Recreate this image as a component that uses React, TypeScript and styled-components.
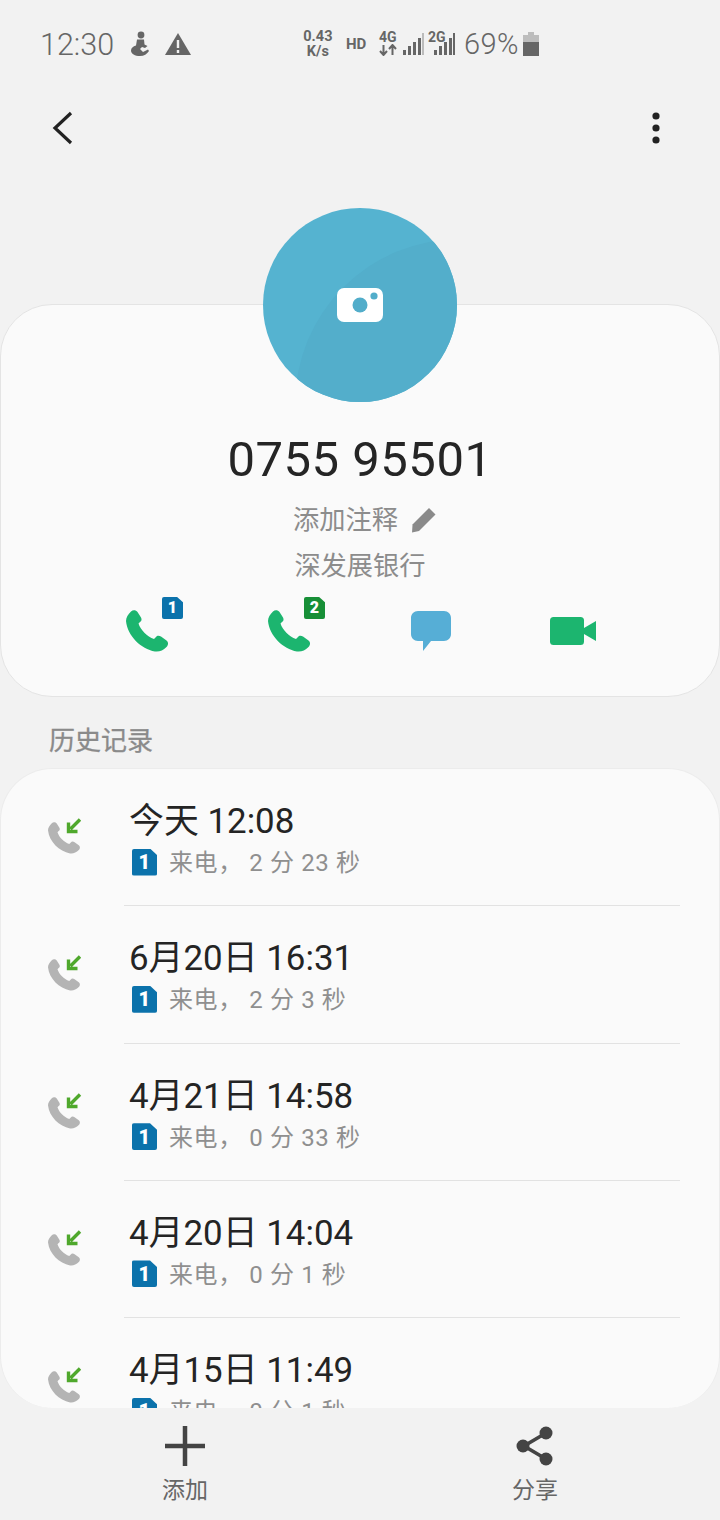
import React from "react";
import styled, { createGlobalStyle } from "styled-components";

const Global = createGlobalStyle`
  html, body { margin: 0; padding: 0; background: #f2f2f2; }
  * { box-sizing: border-box; }
`;

const FONT = `Roboto, "Noto Sans CJK SC", sans-serif`;

const Screen = styled.div`
  width: 720px;
  height: 1520px;
  background: #f2f2f2;
  font-family: ${FONT};
  display: flex;
  flex-direction: column;
  overflow: hidden;
`;

const StatusBar = styled.div`
  height: 88px;
  padding: 0 181px 0 40px;
  display: flex;
  align-items: center;
  justify-content: space-between;
  color: #666;
`;
const StatusGroup = styled.div`
  display: flex;
  align-items: center;
`;
const Clock = styled.span`
  font-size: 30.5px;
  font-weight: 300;
  margin-right: 15px;
`;
const Speed = styled.span`
  font-size: 14.5px;
  font-weight: 700;
  line-height: 15px;
  text-align: center;
  width: 34px;
  margin-right: 11px;
  display: block;
`;
const Hd = styled.span`
  font-size: 15px;
  font-weight: 700;
  width: 22px;
  margin-right: 11px;
`;
const NetStack = styled.div<{ $w: number }>`
  width: ${(p) => p.$w}px;
  height: 26px;
  flex: none;
  display: flex;
  flex-direction: column;
  align-items: flex-start;
  font-size: 14px;
  font-weight: 700;
  line-height: 13px;
  white-space: nowrap;
`;
const Percent = styled.span`
  font-size: 29px;
  font-weight: 300;
  margin: 0 4px 0 9px;
  letter-spacing: 0.5px;
`;

const NavBar = styled.div`
  height: 80px;
  padding: 0 60px 0 52px;
  display: flex;
  align-items: center;
  justify-content: space-between;
`;

const ContactCard = styled.section`
  margin-top: 136px;
  height: 393px;
  background: #fafafa;
  border: 1px solid #e4e4e4;
  border-radius: 52px;
  display: flex;
  flex-direction: column;
  align-items: center;
`;
const Avatar = styled.div`
  width: 194px;
  height: 194px;
  margin-top: -97px;
  border-radius: 50%;
  background: #55b3d0;
  position: relative;
  overflow: hidden;
  flex: none;
  display: flex;
  align-items: center;
  justify-content: center;
  &::before {
    content: "";
    position: absolute;
    left: 32px;
    top: 31px;
    width: 330px;
    height: 330px;
    border-radius: 50%;
    background: #53aecb;
  }
  svg { position: relative; }
`;
const Name = styled.h1`
  margin: 30px 0 0;
  font-size: 49px;
  line-height: 56px;
  font-weight: 400;
  color: #252525;
  letter-spacing: 0.5px;
`;
const NoteRow = styled.div`
  margin-top: 14px;
  height: 36px;
  padding-left: 9px;
  display: flex;
  align-items: center;
  gap: 13px;
  font-size: 26.25px;
  line-height: 36px;
  color: #8c8c8c;
`;
const Org = styled.div`
  margin-top: 10px;
  font-size: 26.25px;
  line-height: 36px;
  color: #8c8c8c;
`;
const Actions = styled.div`
  margin-top: 17px;
  width: 568px;
  display: grid;
  grid-template-columns: repeat(4, 142px);
  height: 60px;
`;
const ActionCell = styled.div`
  position: relative;
  display: flex;
  align-items: center;
  justify-content: center;
`;
const Sim = styled.span<{ $bg: string; $size: number }>`
  display: flex;
  align-items: center;
  justify-content: center;
  flex: none;
  width: ${(p) => p.$size}px;
  height: ${(p) => Math.round(p.$size * 1.07)}px;
  background: ${(p) => p.$bg};
  color: #fff;
  font-weight: 900;
  font-size: ${(p) => Math.round(p.$size * 0.78)}px;
  line-height: 1;
  border-radius: 2px;
  clip-path: polygon(0 0, 72% 0, 100% 24%, 100% 100%, 0 100%);
`;
const SimCorner = styled.div`
  position: absolute;
  left: 86px;
  top: -4px;
`;

const HistoryTitle = styled.h2`
  margin: 26px 0 9px 49px;
  font-size: 26px;
  line-height: 36px;
  font-weight: 400;
  color: #8a8a8a;
  -webkit-text-stroke: 0.3px #8a8a8a;
`;
const HistoryCard = styled.section`
  height: 640px;
  flex: none;
  background: #fafafa;
  border: 1px solid #ececec;
  border-bottom: none;
  border-radius: 52px;
  overflow: hidden;
`;
const Row = styled.div`
  height: 137.33px;
  padding-left: 46px;
  display: flex;
`;
const RowIcon = styled.div`
  width: 36px;
  margin: 48px 41px 0 0;
  flex: none;
`;
const RowBody = styled.div`
  flex: 1;
  margin-right: 39px;
  padding: 31px 0 0 5px;
  border-bottom: 1px solid #e2e2e2;
`;
const When = styled.div`
  font-size: 34.9px;
  line-height: 44px;
  color: #242424;
`;
const Detail = styled.div`
  display: flex;
  align-items: center;
  gap: 12px;
  padding: 1px 0 0 3px;
  height: 35px;
  font-size: 24px;
  color: #8f8f8f;
  letter-spacing: 0.6px;
`;
const DetailText = styled.span`
  margin-bottom: 3px;
`;

const BottomBar = styled.nav`
  flex: 1;
  padding: 0 10px;
  display: grid;
  grid-template-columns: 350px 350px;
`;
const BottomItem = styled.div`
  display: flex;
  flex-direction: column;
  align-items: center;
  padding-top: 18px;
  font-size: 23px;
  line-height: 30px;
  color: #666;
  svg { display: block; margin-bottom: 10px; }
`;

const PHONE =
  "M5 1.5C7-.5 10 0 11.5 2L15 7.5C16 9.5 15.5 11 14 12L12.5 13.5C14.5 20 21 26.5 28 29L30 27C31 25.5 33 25.5 35 26.5L40.5 30.5C42.5 32 42.5 35 40.5 37C37 40.5 33.5 42 29 41.5C15 39 1.5 26 0 11C0 7.5 2 4.5 5 1.5Z";

const PhoneIcon = () => (
  <svg width="42" height="42" viewBox="0 0 42 42"><path d={PHONE} fill="#1cb56f" /></svg>
);

const CallIn = () => (
  <svg width="36" height="38" viewBox="0 0 36 38">
    <g transform="translate(1 5) scale(0.76)"><path d={PHONE} fill="#b4b4b4" /></g>
    <path d="M33 2.5L23.5 12M21.5 5.5V14.5H30.5" fill="none" stroke="#4fa82c" strokeWidth="3.4" />
  </svg>
);

const Bars = ({ last }: { last: string }) => (
  <svg width="21" height="24" viewBox="0 0 21 24">
    <rect x="0" y="18" width="3" height="5" fill="#666" />
    <rect x="5" y="14" width="3" height="9" fill="#666" />
    <rect x="10" y="10" width="3" height="13" fill="#666" />
    <rect x="15" y="6" width="3" height="17" fill="#666" />
    <rect x="19" y="1" width="2" height="22" fill={last} />
  </svg>
);

const calls = [
  ["今天 12:08", "来电， 2 分 23 秒"],
  ["6月20日 16:31", "来电， 2 分 3 秒"],
  ["4月21日 14:58", "来电， 0 分 33 秒"],
  ["4月20日 14:04", "来电， 0 分 1 秒"],
  ["4月15日 11:49", "来电， 0 分 1 秒"],
];

export default function App() {
  return (
    <Screen>
      <Global />
      <StatusBar>
        <StatusGroup>
          <Clock>12:30</Clock>
          <svg width="22" height="26" viewBox="0 0 22 26" style={{ marginRight: 14 }}>
            <circle cx="12" cy="4" r="3.4" fill="#666" />
            <path d="M8 8.5h7l.5 5 3 1.5-2.5 2-3-1-2 2 3 3 5-2.5 1 1.5c-2 3-5 5-9 5-5 0-9-2-9-5.5 0-2.5 2-4 5-5z" fill="#666" />
          </svg>
          <svg width="26" height="24" viewBox="0 0 26 24">
            <path d="M13 1L26 23H0Z" fill="#666" />
            <path d="M13 8v8M13 18v3" stroke="#f2f2f2" strokeWidth="2.4" />
          </svg>
        </StatusGroup>
        <StatusGroup>
          <Speed>0.43<br />K/s</Speed>
          <Hd>HD</Hd>
          <NetStack $w={24}>
            4G
            <svg width="18" height="12" viewBox="0 0 18 12">
              <path d="M4.5 1V10M1 7L4.5 11L8 7M13.5 11V2M10 5L13.5 1L17 5" fill="none" stroke="#666" strokeWidth="2" />
            </svg>
          </NetStack>
          <Bars last="#bbb" />
          <NetStack $w={6} style={{ marginLeft: 4 }}>2G</NetStack>
          <Bars last="#666" />
          <Percent>69%</Percent>
          <svg width="16" height="24" viewBox="0 0 16 24">
            <path d="M5 0h6v3h5v7H0V3h5z" fill="#bdbdbd" />
            <rect x="0" y="10" width="16" height="14" fill="#666" />
          </svg>
        </StatusGroup>
      </StatusBar>

      <NavBar>
        <svg width="22" height="34" viewBox="0 0 22 34">
          <path d="M19 2L3 17L19 32" fill="none" stroke="#222" strokeWidth="3.2" />
        </svg>
        <svg width="8" height="34" viewBox="0 0 8 34">
          <circle cx="4" cy="5" r="3.6" fill="#222" />
          <circle cx="4" cy="17" r="3.6" fill="#222" />
          <circle cx="4" cy="29" r="3.6" fill="#222" />
        </svg>
      </NavBar>

      <ContactCard>
        <Avatar>
          <svg width="46" height="34" viewBox="0 0 46 34">
            <rect width="46" height="34" rx="7" fill="#fff" />
            <circle cx="23" cy="17" r="7.5" fill="#52adca" />
            <circle cx="37" cy="8" r="3.6" fill="#52adca" />
          </svg>
        </Avatar>
        <Name>0755 95501</Name>
        <NoteRow>
          添加注释
          <svg width="25" height="26" viewBox="0 0 25 26">
            <path d="M18 1L24.5 7.5L8 24L1 25.5L1.5 17.5Z" fill="#8a8a8a" />
          </svg>
        </NoteRow>
        <Org>深发展银行</Org>
        <Actions>
          <ActionCell>
            <PhoneIcon />
            <SimCorner><Sim $bg="#0b72ab" $size={21}>1</Sim></SimCorner>
          </ActionCell>
          <ActionCell>
            <PhoneIcon />
            <SimCorner><Sim $bg="#178f37" $size={21}>2</Sim></SimCorner>
          </ActionCell>
          <ActionCell>
            <svg width="40" height="40" viewBox="0 0 40 40">
              <path d="M7 0H33C37 0 40 3 40 7V23C40 27 37 30 33 30H20L12 40V30H7C3 30 0 27 0 23V7C0 3 3 0 7 0Z" fill="#56aed6" />
            </svg>
          </ActionCell>
          <ActionCell>
            <svg width="46" height="28" viewBox="0 0 46 28">
              <rect width="34" height="28" rx="3.5" fill="#1cb56f" />
              <path d="M34 11L46 4V24L34 17Z" fill="#1cb56f" />
            </svg>
          </ActionCell>
        </Actions>
      </ContactCard>

      <HistoryTitle>历史记录</HistoryTitle>
      <HistoryCard>
        {calls.map(([when, detail]) => (
          <Row key={when}>
            <RowIcon><CallIn /></RowIcon>
            <RowBody>
              <When>{when}</When>
              <Detail>
                <Sim $bg="#0b72ab" $size={25}>1</Sim>
                <DetailText>{detail}</DetailText>
              </Detail>
            </RowBody>
          </Row>
        ))}
      </HistoryCard>

      <BottomBar>
        <BottomItem>
          <svg width="40" height="40" viewBox="0 0 40 40">
            <path d="M20 0V40M0 20H40" stroke="#444" strokeWidth="4.5" />
          </svg>
          添加
        </BottomItem>
        <BottomItem>
          <svg width="38" height="40" viewBox="0 0 38 40">
            <path d="M30 7L8 20L30 33" fill="none" stroke="#444" strokeWidth="3.6" />
            <circle cx="30" cy="7" r="6.5" fill="#444" />
            <circle cx="7" cy="20" r="6.5" fill="#444" />
            <circle cx="30" cy="33" r="6.5" fill="#444" />
          </svg>
          分享
        </BottomItem>
      </BottomBar>
    </Screen>
  );
}
